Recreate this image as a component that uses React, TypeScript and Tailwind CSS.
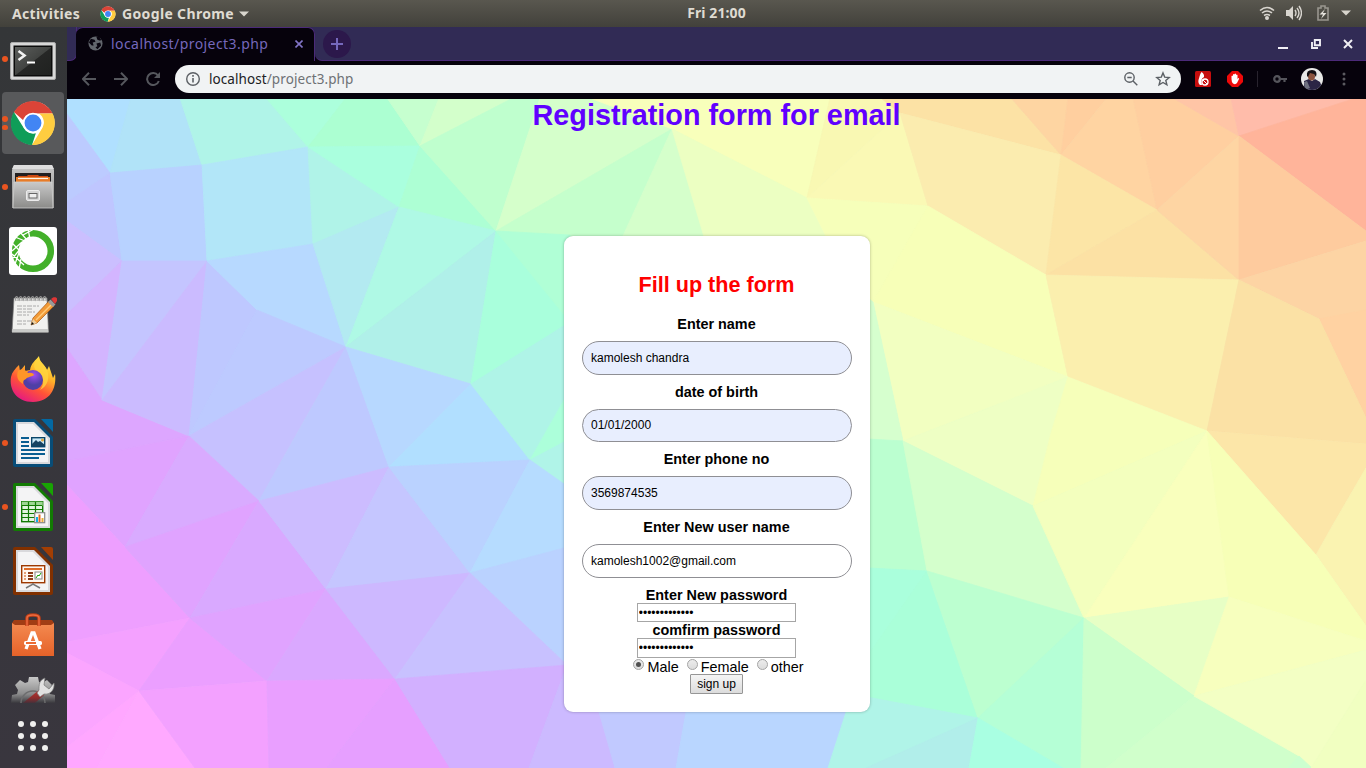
import React from "react";

const facets: [string, string][] = [
  // left side
  ["#b0e0ff", "67,98 131,98 110,173 67,114"],
  ["#b1e3f8", "131,98 180,98 202,165 110,173"],
  ["#b0f4e8", "180,98 266,98 308,147 202,165"],
  ["#acffdc", "266,98 346,98 308,147"],
  ["#acffd2", "346,98 387,98 420,146 308,147"],
  ["#bccbff", "67,114 110,173 67,202"],
  ["#bfc6ff", "67,202 110,173 122,261 67,221"],
  ["#b8d2ff", "110,173 202,165 207,261 122,261"],
  ["#b2e6f8", "202,165 308,147 313,244 207,261"],
  ["#b0f3e8", "308,147 399,207 313,244"],
  ["#aaffde", "308,147 420,146 399,207"],
  ["#adffd4", "420,146 496,231 399,207"],
  ["#c6ffcf", "387,98 439,98 420,146"],
  ["#d3ffcb", "439,98 513,98 420,146"],
  ["#bfffce", "513,98 540,98 496,231 420,146"],
  ["#cbbfff", "67,221 122,261 67,314"],
  ["#d3b5ff", "67,314 122,261 102,400 67,348"],
  ["#dda6ff", "67,348 102,400 189,436 67,461"],
  ["#c4c5ff", "122,261 207,261 102,400"],
  ["#cbbbff", "207,261 189,436 102,400"],
  ["#bec8ff", "207,261 257,310 189,436"],
  ["#b7d9ff", "207,261 313,244 346,347 257,310"],
  ["#bdcaff", "257,310 346,347 189,436"],
  ["#b3eaf1", "313,244 399,207 346,347"],
  ["#aff9e5", "399,207 496,231 346,347"],
  ["#b0f0e9", "496,231 471,384 346,347"],
  ["#c6c1ff", "346,347 297,433 259,501 189,436"],
  ["#bec9ff", "346,347 389,467 259,501"],
  ["#b7d8ff", "346,347 471,384 389,467"],
  ["#b1dfff", "471,384 530,460 389,467"],
  ["#a9ffdc", "496,231 570,315 570,335 471,384"],
  ["#aff4e7", "471,384 570,322 570,433 530,460"],
  ["#acffda", "564,400 564,444 530,460"],
  ["#b0f4e8", "530,460 564,442 564,484"],
  ["#e0a3ff", "67,461 189,436 125,547 67,485"],
  ["#d9abff", "189,436 259,501 125,547"],
  ["#ee9fff", "67,485 125,547 190,618 67,642"],
  ["#e0a3ff", "125,547 259,501 190,618"],
  ["#d9a9ff", "259,501 326,589 190,618"],
  ["#ccbcff", "259,501 389,467 326,589"],
  ["#c5c6ff", "389,467 470,573 326,589"],
  ["#bad2ff", "389,467 530,460 470,573"],
  ["#b6dcff", "530,460 564,484 564,548 470,573"],
  ["#bad2ff", "470,573 564,548 567,665"],
  ["#f4a1ff", "67,642 190,618 139,691 67,653"],
  ["#eb9fff", "190,618 267,681 139,691"],
  ["#e0a3ff", "190,618 326,589 267,681"],
  ["#daa8ff", "326,589 395,679 267,681"],
  ["#cdb8ff", "326,589 470,573 395,679"],
  ["#c8c1ff", "470,573 567,665 395,679"],
  ["#fba5ff", "67,653 139,691 67,747"],
  ["#ffa7ff", "67,747 139,691 97,768 67,768"],
  ["#ffa9ff", "139,691 195,768 97,768"],
  ["#f3a1ff", "139,691 267,681 269,768 195,768"],
  ["#e99fff", "267,681 395,679 327,768 269,768"],
  ["#e69fff", "395,679 450,768 327,768"],
  ["#d2b0ff", "395,679 567,665 529,768 450,768"],
  ["#ccbaff", "567,665 602,716 615,768 529,768"],
  ["#c1c9ff", "567,665 690,690 676,768 615,768 599,712"],
  // upper centre
  ["#f6ffba", "800,190 840,200 880,305 860,300"],
  ["#d5ffcb", "540,98 590,98 672,129 496,231"],
  ["#f8ffbb", "590,98 830,98 807,198 672,129"],
  ["#c5ffcc", "672,129 623,236 564,245 496,231"],
  ["#b0ffd6", "496,231 570,235 570,322"],
  ["#d5ffcb", "672,129 705,236 623,236"],
  ["#ecffc2", "672,129 807,198 830,240 705,240"],
  ["#f9f8b3", "830,98 881,98 900,113 807,198"],
  ["#faf9b5", "807,198 900,113 928,206"],
  ["#f6ffba", "807,198 928,206 873,302 828,240"],
  // right side
  ["#eeffc4", "1072,377 1045,433 1030,506 1000,400"],
  ["#fce2a5", "881,98 1011,98 1061,155 900,113"],
  ["#fed5a2", "1011,98 1068,98 1061,155"],
  ["#ffcf9f", "1068,98 1107,98 1061,155"],
  ["#ffd4a2", "1107,98 1133,98 1157,210 1061,155"],
  ["#ffcfa0", "1133,98 1173,98 1239,136 1157,210"],
  ["#ffc5a6", "1173,98 1231,98 1239,136"],
  ["#ffbcaa", "1231,98 1356,98 1239,136"],
  ["#ffb49a", "1356,98 1366,98 1366,231 1239,136"],
  ["#fbecaf", "900,113 1061,155 1046,275 928,206"],
  ["#fce5a6", "1061,155 1157,210 1046,275"],
  ["#fce1a4", "1157,210 1239,280 1046,275"],
  ["#fed5a3", "1157,210 1239,136 1239,280"],
  ["#fecb9e", "1239,136 1366,231 1366,241 1239,280"],
  ["#f7ffb8", "928,206 1046,275 1068,377 873,302"],
  ["#fbefae", "1046,275 1239,280 1207,431 1068,377"],
  ["#fdd4a4", "1239,280 1366,241 1366,330 1319,319"],
  ["#ffd2a2", "1319,319 1366,310 1366,418"],
  ["#fbe1a5", "1239,280 1319,319 1366,418 1366,444 1207,431"],
  ["#f2ffc1", "873,302 1068,377 903,441"],
  ["#d6ffce", "868,298 873,302 903,441 868,439"],
  ["#eeffc4", "1068,377 1051,433 1033,506 903,441"],
  ["#f6ffba", "1068,377 1207,431 1033,506 1051,433"],
  ["#fce6a8", "1207,431 1366,444 1366,468 1334,523 1316,555"],
  ["#faf3b1", "1366,468 1366,626 1316,555 1334,523"],
  ["#bbffd0", "868,439 903,441 927,571 868,568"],
  ["#d4ffcc", "903,441 1033,506 1084,618 927,571"],
  ["#f3ffbe", "1033,506 1207,431 1084,618"],
  ["#f9ffbd", "1207,431 1229,597 1084,618"],
  ["#f7ffb7", "1207,431 1316,555 1366,626 1366,641 1229,597"],
  ["#aaffdc", "868,568 927,571 868,655"],
  ["#aaffd9", "927,571 978,718 868,697 868,655"],
  ["#bcffd0", "927,571 1084,618 978,718"],
  ["#b5ffd6", "1084,618 1081,768 1063,768 978,718"],
  ["#e7ffc5", "1084,618 1229,597 1194,696"],
  ["#f7ffbe", "1229,597 1366,641 1366,650 1194,696"],
  ["#ccffcb", "1084,618 1194,696 1106,768 1081,768"],
  ["#d0ffcb", "1194,696 1299,756 1288,769 1106,768"],
  ["#f3ffc4", "1194,696 1366,650 1366,680 1311,768 1299,756"],
  ["#ccffcf", "1299,756 1313,769 1287,769"],
  ["#f1ffc1", "1366,680 1366,768 1311,768"],
  ["#b9d6ff", "690,690 840,690 866,768 676,768"],
  ["#b0f4e8", "840,692 978,718 870,768 828,768 848,706"],
  ["#b1eeea", "978,718 969,768 866,768"],
  ["#a9ffe2", "978,718 1063,768 969,768"],
];

const Backdrop = () => (
  <svg className="absolute inset-0 h-full w-full" viewBox="67 99 1299 669" preserveAspectRatio="none">
    <rect x="67" y="99" width="1299" height="669" fill="#c5e8e5" />
    {facets.map(([c, p], i) => (
      <polygon key={i} points={p} fill={c} stroke={c} strokeWidth="0.8" strokeLinejoin="round" />
    ))}
  </svg>
);

const ChromeLogo = ({ className }: { className: string }) => (
  <svg viewBox="0 0 48 48" className={className}>
    <circle cx="24" cy="24" r="22.500" fill="#fff" />
    <path d="M4 12.500A23 23 0 0 1 44.500 14H24a11 11 0 0 0-10.200 7z" fill="#db4437" />
    <path d="M4 12.500l10.500 17A11 11 0 0 0 27 34.700L23 47A23 23 0 0 1 4 12.500z" fill="#0f9d58" />
    <path d="M44.500 14a23 23 0 0 1-21.500 33l10.500-17.500A11 11 0 0 0 30 14z" fill="#ffcd40" />
    <circle cx="24" cy="24" r="10.800" fill="#fff" />
    <circle cx="24" cy="24" r="8.800" fill="#4285f4" />
  </svg>
);

const Terminal = () => (
  <svg viewBox="0 0 48 48" className="h-12 w-12">
    <defs>
      <linearGradient id="term" x1="0" y1="0" x2="1" y2="1">
        <stop offset="0" stopColor="#5c5e5c" /><stop offset=".5" stopColor="#424442" /><stop offset=".52" stopColor="#262726" /><stop offset="1" stopColor="#202220" />
      </linearGradient>
    </defs>
    <rect x="1.500" y="5.500" width="45" height="37" rx="1.500" fill="#d8d8d8" stroke="#aaa" />
    <rect x="4.500" y="8.500" width="39" height="31" fill="#0b0b0b" />
    <rect x="6" y="10" width="36" height="28" fill="url(#term)" />
    <path d="M9.500 14l6 4.500-6 4.500" fill="none" stroke="#f2f2f2" strokeWidth="2.600" />
    <path d="M18 25.500h8" stroke="#fff" strokeWidth="2" />
  </svg>
);

const Files = () => (
  <svg viewBox="0 0 48 48" className="h-12 w-12">
    <defs>
      <linearGradient id="cab" x1="0" y1="0" x2="0" y2="1"><stop offset="0" stopColor="#c9c9c9" /><stop offset="1" stopColor="#8b8b89" /></linearGradient>
    </defs>
    <path d="M5 2h38l2 5v38H3V7z" fill="url(#cab)" />
    <path d="M5 2h38l2 4H3z" fill="#dedede" />
    <rect x="6" y="10" width="36" height="13" fill="#232020" />
    <path d="M9 13h9l1-1h10l1 1h9v7H9z" fill="#cf4a12" />
    <rect x="7" y="14" width="34" height="8" fill="#e87c28" />
    <path d="M9 15.500h30" stroke="#fff3e8" strokeWidth="1.200" />
    <path d="M5 19h38l1 26H4z" fill="url(#cab)" stroke="#cfcfcf" strokeWidth=".8" />
    <rect x="17.500" y="27.500" width="13" height="10" rx="1.500" fill="#d4d4d4" stroke="#ececec" />
    <rect x="20" y="30.500" width="8" height="4.500" fill="#eee" stroke="#666" />
  </svg>
);

const Anaconda = () => (
  <svg viewBox="0 0 48 48" className="h-12 w-12">
    <rect width="48" height="48" rx="3" fill="#fff" />
    <circle cx="24" cy="24" r="17.800" fill="none" stroke="#43b02a" strokeWidth="6.500" />
    <path d="M3 16l9 9M6 10l10 4M11 5l7 8M19 2l2 10M12 19l8-9M3 24l10-9M3 32l9-11M6 37l5-14M10 42l2-10M3 27l12 11M25 2l-11 6" stroke="#fff" strokeWidth="1.300" />
  </svg>
);

const Notes = () => (
  <svg viewBox="0 0 48 48" className="h-12 w-12">
    <path d="M5 7h33l1.500 34H3z" fill="#f1f1ef" stroke="#777" strokeWidth=".7" />
    <path d="M3.500 38h35.500l.5 3.500H3z" fill="#c9cac8" />
    {[7, 11, 15, 19, 23, 27, 31, 35].map((x) => (
      <path key={x} d={`M${x} 10c-2-6 3-6 2 0`} fill="none" stroke="#999" strokeWidth="1.200" />
    ))}
    <path d="M8 15h22M8 18h15M8 21h18M8 24h12M8 30h21M8 33h10" stroke="#999" strokeWidth=".8" strokeDasharray="5 1 3 1" />
    <path d="M22 34l2-7L40 10l5 5-17 17z" fill="#f29a37" stroke="#a65711" strokeWidth=".7" />
    <path d="M27 29L42 14" stroke="#ffcc7b" strokeWidth="1.500" />
    <path d="M39 11l2.500-2.500 5 5L44 16z" fill="#999" /><path d="M42 8l2-1.500c3-1 5 1 4 3.500l-2 3z" fill="#df3636" />
    <path d="M22 34l2-6 4 4z" fill="#edcf9f" /><path d="M22 34l1-3 2 2z" fill="#111" />
  </svg>
);

const Firefox = () => (
  <svg viewBox="0 0 48 48" className="h-12 w-12">
    <defs>
      <linearGradient id="fox" x1=".8" y1="0" x2=".25" y2="1"><stop offset="0" stopColor="#fff44f" /><stop offset=".35" stopColor="#ffb529" /><stop offset=".65" stopColor="#ff5337" /><stop offset="1" stopColor="#e31587" /></linearGradient>
      <radialGradient id="globe" cx=".55" cy=".25"><stop offset="0" stopColor="#a34bf2" /><stop offset="1" stopColor="#4f3fa6" /></radialGradient>
    </defs>
    <path d="M10 10L11 16 16 10v6l5-1c1-7 6-10 9-14 0 6 6 8 8 14l2-4 4 12 2-4c2 14-5 28-22 28C7 47 0 34 2 22c1-5 4-8 8-12z" fill="url(#fox)" />
    <path d="M30 2c-7 7-6 12 0 16 6 5 5 12 1 17 8-4 10-13 7-20-2-5-7-6-8-13z" fill="#ffd53e" opacity=".8" />
    <circle cx="24" cy="25" r="10" fill="url(#globe)" />
    <path d="M9 16c4-3 8-1 10 2 4-1 6 1 6 2-3 2-7 2-8 4-3 1-3 3-3 5-5-3-7-7-5-13z" fill="#ff9527" />
  </svg>
);

const Doc = ({ color, tab, children }: { color: string; tab: string; children: React.ReactNode }) => (
  <svg viewBox="0 0 48 48" className="h-12 w-12">
    <path d="M6 0h20l18 18v28a2 2 0 0 1-2 2H6a2 2 0 0 1-2-2V2a2 2 0 0 1 2-2z" fill={color} />
    <path d="M7 3h18l16 16v26H7z" fill="#d9d9dc" />
    <path d="M9 5h15l15 15v23H9z" fill="#f4f4f5" />
    <path d="M32 0h10a2 2 0 0 1 2 2v11z" fill={tab} />
    {children}
  </svg>
);

const Writer = () => (
  <Doc color="#084d78" tab="#0369a3">
    <path d="M12 19h8M12 23h8M12 27h8M12 31h24M12 35h24M12 39h18" stroke="#0a5e91" strokeWidth="2" />
    <rect x="22.700" y="18.700" width="13" height="9" fill="#cae9f7" stroke="#0a4669" strokeWidth="1.400" />
    <path d="M23 27v-2l4-4 2 2 2-1 5 4v1z" fill="#164361" /><circle cx="33.500" cy="21" r="1.500" fill="#dda43b" />
  </Doc>
);

const Calc = () => (
  <Doc color="#127b03" tab="#18a303">
    <rect x="12.700" y="18.700" width="21" height="20" fill="#e2f5df" stroke="#127b03" strokeWidth="1.400" />
    <rect x="12.700" y="18.700" width="21" height="4" fill="#9ed693" />
    <path d="M13 22.500h20M13 26.500h20M13 30.500h20M13 34.500h20M19.500 19v20M26.500 19v20" stroke="#127b03" strokeWidth="1.200" />
    <rect x="25.700" y="29.700" width="10" height="10" fill="#fff" stroke="#888" strokeWidth="1.200" />
    <path d="M27 34h2v5h-2z" fill="#0cade8" /><path d="M29.500 31.500h2v7.500h-2z" fill="#e66b20" /><path d="M32.500 35h2v4h-2z" fill="#e9ad37" />
  </Doc>
);

const Impress = () => (
  <Doc color="#813000" tab="#a33e03">
    <rect x="12.700" y="18.700" width="23" height="17" fill="#fff7ef" stroke="#9d3901" strokeWidth="1.400" />
    <path d="M15 22h18" stroke="#df6c28" strokeWidth="2" />
    <path d="M15 26h2M15 29h2M15 32h2" stroke="#de8450" strokeWidth="1.500" /><path d="M19 26h5M19 29h5M19 32h5" stroke="#8b3a16" strokeWidth="1.800" />
    <rect x="26" y="25" width="7" height="7" fill="#fff" stroke="#888" /><path d="M27 31l2-3 1 1 2-3" fill="none" stroke="#17a303" />
    <path d="M24 36v2M17 41l7-4 7 4" fill="none" stroke="#777" strokeWidth="1.500" />
  </Doc>
);

const Software = () => (
  <svg viewBox="0 0 48 48" className="h-12 w-12">
    <defs><linearGradient id="bag" x1="0" y1="0" x2="0" y2="1"><stop offset="0" stopColor="#f48a50" /><stop offset="1" stopColor="#e56229" /></linearGradient></defs>
    <path d="M5 9h38l2 3v4H3v-4z" fill="#a13d14" />
    <path d="M3 12l3 2h36l3-2v33H3z" fill="url(#bag)" />
    <path d="M18 15V7c0-4 12-4 12 0v8" fill="none" stroke="#bf3e16" strokeWidth="3.500" /><path d="M18 15V7c0-4 12-4 12 0v8" fill="none" stroke="#ec6b3f" strokeWidth="1.500" />
    <path d="M17 38l6-16h2l6 16" fill="none" stroke="#fff" strokeWidth="3.300" />
    <rect x="15" y="30" width="18" height="4" rx="1.500" fill="#fff" /><path d="M17 32h10" stroke="#ec6c35" strokeWidth="2" />
  </svg>
);

const Settings = () => (
  <svg viewBox="0 0 48 30" className="h-[30px] w-12">
    <defs>
      <linearGradient id="fade" x1="0" y1="0" x2="0" y2="1"><stop offset="0" stopColor="#c8c8c8" /><stop offset=".65" stopColor="#8c8c8d" /><stop offset="1" stopColor="#39383d" /></linearGradient>
      <linearGradient id="grip" x1="0" y1="0" x2="0" y2="1"><stop offset="0" stopColor="#b83330" /><stop offset=".6" stopColor="#8f2c2c" /><stop offset="1" stopColor="#47303a" /></linearGradient>
    </defs>
    <path d="M2 29l1-8 5-1 1-4-3-5 5-5 5 3 3-1 1-5h9l1 5 3 1 5-3 5 5-3 5 1 4 5 1v8z" fill="url(#fade)" />
    <path d="M12 29a12 12 0 0 1 24 0" fill="none" stroke="#6d6d6e" strokeWidth="1.500" />
    <path d="M14 29l16-13 5 5-9 8z" fill="url(#grip)" />
    <path d="M30 16c0-5 0-10 6-12l-1 7 5 4 5-6c1 7-4 12-10 11l-4 3-3-4z" fill="#e1e1e1" stroke="#777" strokeWidth=".7" />
  </svg>
);

const Launcher = ({ dots = 0, active = false, children }: { dots?: number; active?: boolean; children: React.ReactNode }) => (
  <div className="flex h-16 w-full shrink-0 items-center">
    <div className={`relative ml-[2px] flex h-[62px] w-[62px] items-center justify-center rounded ${active ? "bg-[#58595b]" : ""}`}>
      <span className="absolute left-0 flex flex-col gap-[3px]">
        {Array.from({ length: dots }, (_, i) => <i key={i} className="h-[5.500px] w-[5.500px] rounded-full bg-[#e95420]" />)}
      </span>
      {children}
    </div>
  </div>
);

const Label = ({ children }: { children: React.ReactNode }) => <b className="block text-center text-[14.400px] leading-4">{children}</b>;

const Field = ({ label, value, filled = true, h = "h-[34px]" }: { label: string; value: string; filled?: boolean; h?: string }) => (
  <label className="block w-full">
    <Label>{label}</Label>
    <input readOnly value={value} className={`mt-[9px] mb-[9px] block w-[270px] rounded-[17px] border border-[#8f8f94] px-[8.500px] text-[12px] text-black outline-none ${h} ${filled ? "bg-[#e8eefe]" : "bg-white"}`} />
  </label>
);

const Secret = ({ label, h }: { label: string; h: string }) => (
  <label className="flex flex-col items-center">
    <Label>{label}</Label>
    <input readOnly value="•••••••••••••" className={`block w-[159.500px] border border-[#a6a6a6] bg-white px-[1px] text-[12px] text-black outline-none ${h}`} />
  </label>
);

const Choice = ({ text, checked = false }: { text: string; checked?: boolean }) => (
  <label className="flex items-center">
    <span className="mr-[3px] mb-[4px] flex h-[11px] w-[11px] items-center justify-center rounded-full border border-[#a4a4a4] bg-linear-to-b from-[#ececec] to-[#dcdcdc]">
      {checked && <i className="h-[5px] w-[5px] rounded-full bg-[#505050]" />}
    </span>
    {text}
  </label>
);

export default function App() {
  return (
    <div className="flex h-[768px] w-[1366px] flex-col overflow-hidden font-['Liberation_Sans',sans-serif]">
      <header className="flex h-[27px] shrink-0 items-center bg-linear-to-b from-[#59574f] to-[#42413b] font-['Noto_Sans',sans-serif] text-[14px] leading-[18px] font-bold text-[#dfdbd2]">
        <div className="flex flex-1 items-center pl-3">
          <span className="w-[88px] tracking-[0.300px]">Activities</span>
          <ChromeLogo className="h-4 w-4" />
          <span className="ml-[6px] tracking-[0.350px]">Google Chrome</span>
          <svg viewBox="0 0 10 6" className="ml-[5px] h-[6px] w-[10px]"><path d="M0 .5h10L5 5.500z" fill="#d8d5cd" /></svg>
        </div>
        <span className="mr-[-35px] ml-[35px] w-[100px] pb-px text-center text-[14px] tracking-[0.100px]">Fri 21:00</span>
        <div className="flex flex-1 items-center justify-end gap-[11px] pr-[15px] pb-px">
          <svg viewBox="0 0 16 16" className="h-4 w-4"><path d="M1 5.500q7-6 14 0M3 8q5-4 10 0M5 10.500q3-2 6 0" fill="none" stroke="#d8d5cf" strokeWidth="1.600" /><circle cx="8" cy="13" r="2" fill="#d8d5cf" /></svg>
          <svg viewBox="0 0 16 16" className="h-4 w-4"><path d="M0 5h3l4-4v14l-4-4H0z" fill="#d8d5cf" /><path d="M9 5q2 3 0 6M11 3q4 5 0 10M13 1q5 7 0 14" fill="none" stroke="#d8d5cf" strokeWidth="1.400" /></svg>
          <svg viewBox="0 0 12 16" className="ml-[4px] h-4 w-3"><path d="M1 3h3V1h4v2h3v12H1z" fill="none" stroke="#99968f" strokeWidth="1.600" /><path d="M8 4L2.500 9.500H6L4 14l5.500-6H6z" fill="#e5e2dc" /></svg>
          <svg viewBox="0 0 10 6" className="ml-px h-[6px] w-[10px]"><path d="M0 .5h10L5 5.500z" fill="#d8d5cd" /></svg>
        </div>
      </header>

      <div className="flex min-h-0 grow">
        <aside className="flex w-[67px] shrink-0 flex-col bg-linear-to-b from-[#343638] to-[#39363e]">
          <Launcher dots={1}><div className="pt-[4px]"><Terminal /></div></Launcher>
          <Launcher dots={2} active><ChromeLogo className="h-[46px] w-[46px]" /></Launcher>
          <Launcher dots={1}><Files /></Launcher>
          <Launcher><Anaconda /></Launcher>
          <Launcher><Notes /></Launcher>
          <Launcher><Firefox /></Launcher>
          <Launcher dots={1}><Writer /></Launcher>
          <Launcher dots={1}><Calc /></Launcher>
          <Launcher><Impress /></Launcher>
          <Launcher><Software /></Launcher>
          <div className="mt-[7px] flex h-[30px] w-[66px] shrink-0 justify-center"><Settings /></div>
          <div className="mt-[17px] ml-[18px] grid w-[30px] grid-cols-3 gap-[6px]">
            {Array.from({ length: 9 }, (_, i) => <i key={i} className="h-[6px] w-[6px] rounded-full bg-[#f0f0ee]" />)}
          </div>
        </aside>

        <div className="flex min-w-0 grow flex-col">
          <div className="flex h-[34px] shrink-0 bg-[#312b55] font-['Noto_Sans',sans-serif]">
            <div className="flex w-[10px] bg-[#06020c]"><div className="w-[10px] rounded-br-[7px] border-r border-b border-[#4b2a79] bg-[#312b55]" /></div>
            <div className="-ml-px flex w-[239px] items-center rounded-t-[7px] border-t border-r border-[#4b2a79] bg-[#06020c] pb-[2px] pl-[12px]">
              <svg viewBox="0 0 16 16" className="h-[15px] w-[15px]"><circle cx="8" cy="8" r="7.500" fill="#62666d" /><path d="M3 3l4 1 1 2-3 1 1 3H4L1 7zM9 1l1 3 3 1 1-1-2-3zM9 8l4-1 1 3-4 4-2-2 2-1z" fill="#08040f" /></svg>
              <span className="ml-[8px] w-[184px] text-[14px] leading-[18px] tracking-[0.430px] text-[#7568bb]">localhost/project3.php</span>
              <svg viewBox="0 0 8 8" className="h-2 w-2"><path d="M.5.5l7 7M7.500.5l-7 7" stroke="#8174c7" strokeWidth="1.600" /></svg>
            </div>
            <div className="flex grow bg-[#06020c]">
              <div className="flex grow items-center rounded-bl-[7px] border-b border-[#4b2a79] bg-[#312b55]">
                <div className="ml-[8px] flex h-7 w-7 items-center justify-center rounded-full bg-[#2c184b]">
                  <svg viewBox="0 0 12 12" className="h-3 w-3"><path d="M6 0v12M0 6h12" stroke="#7668bc" strokeWidth="2" /></svg>
                </div>
                <div className="mr-[13px] ml-auto flex items-center gap-[22.500px]">
                  <svg viewBox="0 0 10 10" className="h-[10px] w-[10px]"><path d="M0 9h10" stroke="#f0eff4" strokeWidth="2" /></svg>
                  <svg viewBox="0 0 10 10" className="h-[10px] w-[10px]"><path d="M3.800 1H9v5.200H3.800zM1 3v6h6" fill="none" stroke="#f0eff4" strokeWidth="1.900" /></svg>
                  <svg viewBox="0 0 10 10" className="h-[10px] w-[10px]"><path d="M1 1l8 8M9 1L1 9" stroke="#f0eff4" strokeWidth="2" /></svg>
                </div>
              </div>
            </div>
          </div>

          <div className="flex h-[38px] shrink-0 items-center bg-[#06020c] pb-[2px]">
            <svg viewBox="0 0 14 14" className="ml-[15px] h-[14px] w-[14px]"><path d="M14 7H1M7 .7L.8 7 7 13.300" fill="none" stroke="#55575d" strokeWidth="2" /></svg>
            <svg viewBox="0 0 14 14" className="ml-[18px] h-[14px] w-[14px]"><path d="M0 7h13M7 .7L13.200 7 7 13.300" fill="none" stroke="#55575d" strokeWidth="2" /></svg>
            <svg viewBox="0 0 14 14" className="ml-[18px] h-[14px] w-[14px]"><path d="M12 3.500A6 6 0 1 0 12.800 9" fill="none" stroke="#55575d" strokeWidth="2" /><path d="M14 0v6H8z" fill="#55575d" /></svg>
            <div className="ml-[15px] flex h-7 w-[1006px] items-center rounded-full bg-[#f1f3f4] pr-[10px] pl-[11px]">
              <svg viewBox="0 0 14 14" className="h-[14px] w-[14px]"><circle cx="7" cy="7" r="6.300" fill="none" stroke="#5c6065" strokeWidth="1.400" /><path d="M7 6v4.500M7 3v1.700" stroke="#5c6065" strokeWidth="1.600" /></svg>
              <span className="ml-[9px] grow font-['Noto_Sans',sans-serif] text-[13.500px] leading-[18px] tracking-[0.080px] text-[#6e7175]"><span className="text-[#202124]">localhost</span>/project3.php</span>
              <svg viewBox="0 0 14 14" className="h-[14px] w-[14px]"><circle cx="5.500" cy="5.500" r="4.700" fill="none" stroke="#5c6065" strokeWidth="1.400" /><path d="M3.300 5.500h4.400M9 9l4.300 4.300" stroke="#5c6065" strokeWidth="1.400" /></svg>
              <svg viewBox="0 0 16 16" className="ml-[17px] h-[16px] w-[16px]"><path d="M8 1.900l1.700 4.200 4.500.4-3.400 2.900 1.100 4.400L8 11.500l-3.900 2.300 1.100-4.400-3.400-2.900 4.500-.4z" fill="none" stroke="#5c6065" strokeWidth="1.400" /></svg>
            </div>
            <svg viewBox="0 0 16 16" className="ml-[14px] h-4 w-4"><rect width="16" height="16" rx="1.500" fill="#c60d0d" /><path d="M5 14C2 11 4 8 4.500 5.500Q5 3 6.500 1q3 2 2.500 5Q5 8 7 14z" fill="#fff" /><circle cx="10" cy="11" r="3" fill="none" stroke="#fff" strokeWidth="1.300" /><path d="M8 9l4 4" stroke="#fff" /></svg>
            <svg viewBox="0 0 16 16" className="ml-[16px] h-4 w-4"><path d="M5 0h6l5 5v6l-5 5H5l-5-5V5z" fill="#ed0909" /><path d="M4.500 8V5q.8-1 1.500 0V3.500q.8-1 1.500 0V3q.8-1 1.500 0v1q.8-1 1.500 0v4l1-1q1 0 .5 1L10 12q-1.500 2-4 .5Q4.500 11 4.500 8z" fill="#fff" /></svg>
            <div className="ml-[14px] h-4 w-px bg-[#28232e]" />
            <svg viewBox="0 0 14 8" className="ml-[15px] h-2 w-[14px]"><path d="M6 4h8M11.500 4v3" fill="none" stroke="#55555c" strokeWidth="2.200" /><circle cx="4" cy="4" r="2.800" fill="none" stroke="#55555c" strokeWidth="2.200" /></svg>
            <svg viewBox="0 0 22 22" className="ml-[14px] h-[22px] w-[22px]">
              <clipPath id="face"><circle cx="11" cy="11" r="11" /></clipPath>
              <g clipPath="url(#face)"><rect width="22" height="22" fill="#e8e8e7" /><path d="M3 13l5-2 3 2 3-2 5 3 3 8H3z" fill="#2b2545" /><path d="M3 14l3-1 3 7-5 2z" fill="#6f7180" /><ellipse cx="10.500" cy="8.500" rx="3.500" ry="4" fill="#8b533e" /><path d="M6 8Q5 2 11 2q6 0 4 7l-2-3-4-1-2 4z" fill="#141014" /></g>
            </svg>
            <svg viewBox="0 0 4 14" className="ml-[19px] h-[14px] w-1"><circle cx="2" cy="2" r="1.500" fill="#5b5a60" /><circle cx="2" cy="7" r="1.500" fill="#5b5a60" /><circle cx="2" cy="12" r="1.500" fill="#5b5a60" /></svg>
          </div>

          <main className="relative flex grow flex-col items-center overflow-hidden">
            <Backdrop />
            <h1 className="relative h-[137px] text-[28.800px] leading-[33px] font-bold text-[#6000ff]">Registration form for email</h1>
            <form className="relative flex h-[476px] w-[306px] flex-col items-center rounded-[9px] bg-white px-[18px] pt-[36px] text-[14.400px] text-black shadow-[0_0_3px_rgba(0,0,0,0.3)]">
              <h2 className="mb-[19px] text-[21.600px] leading-[25px] font-bold text-[#ff0000]">Fill up the form</h2>
              <Field label="Enter name" value="kamolesh chandra" />
              <Field label="date of birth" value="01/01/2000" h="h-[33px] pb-px" />
              <Field label="Enter phone no" value="3569874535" />
              <Field label="Enter New user name" value="kamolesh1002@gmail.com" filled={false} />
              <Secret label="Enter New password" h="h-[19px]" />
              <Secret label="comfirm password" h="h-5" />
              <div className="flex h-4 items-center gap-[8px] pt-px pl-[4px] leading-4">
                <Choice text="Male" checked />
                <Choice text="Female" />
                <Choice text="other" />
              </div>
              <button type="button" className="h-[20px] w-[53px] rounded-[1px] border border-[#969696] bg-linear-to-b from-[#f5f5f5] to-[#dcdcdc] text-[12px] leading-[18px] text-black">sign up</button>
            </form>
          </main>
        </div>
      </div>
    </div>
  );
}
